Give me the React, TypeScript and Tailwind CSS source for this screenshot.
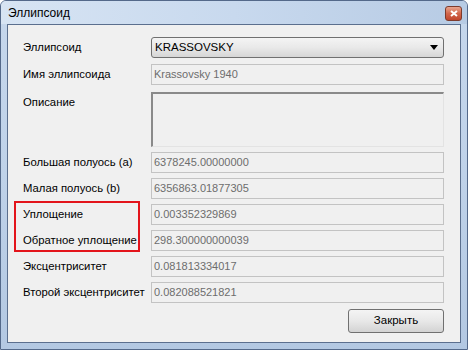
import React from "react"

const font = { fontFamily: '"Liberation Sans", Arial, sans-serif' }

type Row = { label: string; value: string }

const rows: Row[] = [
  { label: "Большая полуось (a)", value: "6378245.00000000" },
  { label: "Малая полуось (b)", value: "6356863.01877305" },
  { label: "Уплощение", value: "0.003352329869" },
  { label: "Обратное уплощение", value: "298.300000000039" },
  { label: "Эксцентриситет", value: "0.081813334017" },
  { label: "Второй эксцентриситет", value: "0.082088521821" },
]

function Field({ value }: { value: string }) {
  return (
    <div className="flex h-[21px] w-[293px] items-center border border-[#c3c3c3] bg-[#f0f0f0] pl-[2px] text-[11px] text-[#6d6d6d]">
      {value}
    </div>
  )
}

export default function App() {
  return (
    <div
      className="relative flex h-[350px] w-[468px] flex-col overflow-hidden rounded-t-[6px] border border-[#54698a] bg-gradient-to-b from-[#c6d7ec] via-[#bfd2e9] to-[#b3c8e2]"
      style={font}
    >
      {/* title bar */}
      <div className="flex h-[23px] items-center justify-between bg-gradient-to-r from-[#d7e4f3] via-[#c8d9ee] to-[#b7cbe4] pl-[7px] pr-[5px]">
        <span className="text-[12px] text-black">Эллипсоид</span>
        <div className="mt-[1px] flex h-[15px] w-[17px] items-center justify-center rounded-[3px] border border-[#7d3b2c] bg-gradient-to-b from-[#e8a58f] via-[#d2664b] to-[#c0452c]">
          <svg width="8" height="7" viewBox="0 0 8 7">
            <path d="M1 1 L7 6 M7 1 L1 6" stroke="#ffffff" strokeWidth="2" />
          </svg>
        </div>
      </div>

      {/* client area */}
      <div className="relative mx-[6px] mb-[6px] flex-1 border border-[#5b6f8e] bg-[#f0f0f0] pl-[15px] pr-[16px] pt-[12px] text-[11.3px]">
        <div className="flex h-[21px] items-center">
          <div className="w-[128px] text-black">Эллипсоид</div>
          <div className="flex h-[21px] w-[293px] items-center justify-between rounded-[3px] border border-[#707070] bg-gradient-to-b from-[#f4f4f4] via-[#e9e9e9] to-[#d6d6d6] pl-[3px] pr-[5px] text-[11.5px] text-black">
            <span>KRASSOVSKY</span>
            <svg width="8" height="5" viewBox="0 0 8 5">
              <path d="M0 0 H8 L4 5 Z" fill="#000000" />
            </svg>
          </div>
        </div>

        <div className="mt-[6px] flex h-[21px] items-center">
          <div className="w-[128px] text-black">Имя эллипсоида</div>
          <Field value="Krassovsky 1940" />
        </div>

        <div className="mt-[7px] flex h-[55px]">
          <div className="w-[128px] pt-[2px] text-black">Описание</div>
          <div className="h-[55px] w-[293px] border-b border-l-2 border-r border-t-2 border-b-[#e3e3e3] border-l-[#8a8a8a] border-r-[#e3e3e3] border-t-[#8a8a8a] bg-[#f0f0f0]" />
        </div>

        <div className="mt-[5px] flex flex-col gap-[5px]">
          {rows.map((r) => (
            <div key={r.label} className="flex h-[21px] items-center">
              <div className="w-[128px] whitespace-nowrap text-black">{r.label}</div>
              <Field value={r.value} />
            </div>
          ))}
        </div>

        <div className="mt-[6px] flex justify-end">
          <div className="flex h-[24px] w-[96px] items-center justify-center rounded-[3px] border border-[#707070] bg-gradient-to-b from-[#f4f4f4] via-[#e8e8e8] to-[#d3d3d3] text-[11.5px] text-black">
            Закрыть
          </div>
        </div>

        {/* highlight */}
        <div className="absolute left-[6px] top-[176px] h-[51px] w-[126px] border-2 border-[#e3141b]" />
      </div>
    </div>
  )
}
